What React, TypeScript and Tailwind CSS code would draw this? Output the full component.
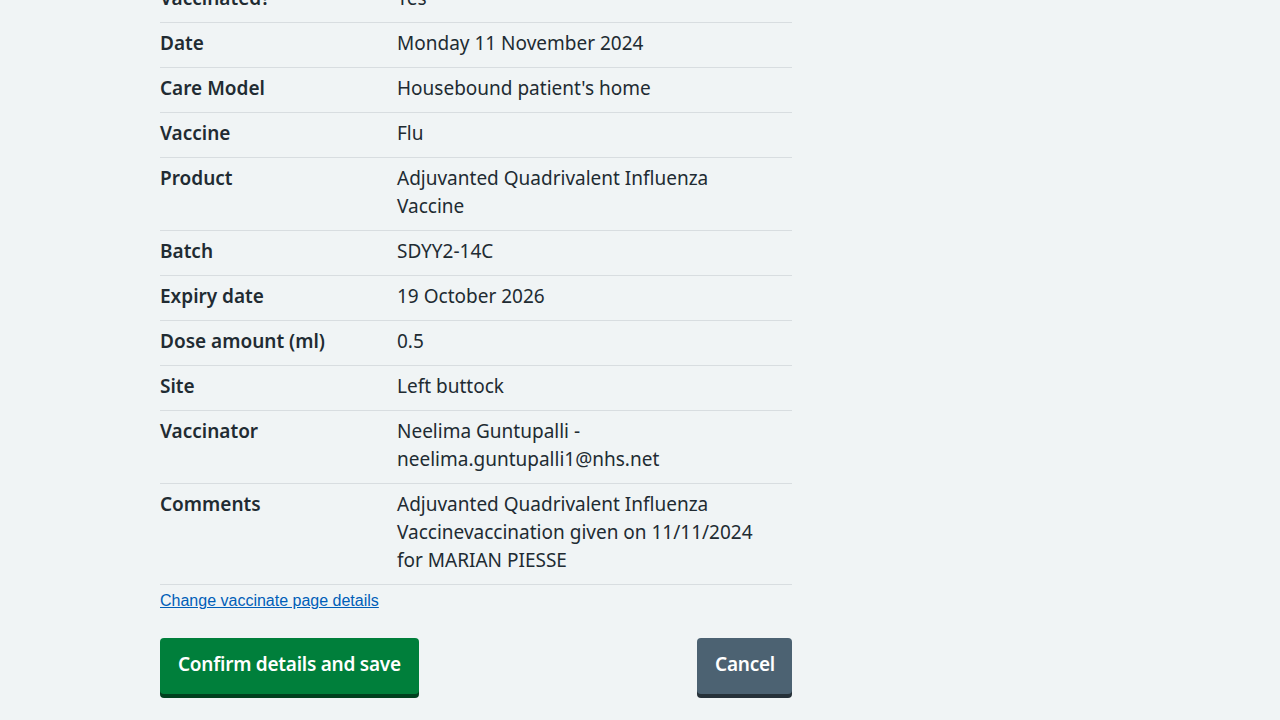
import React from "react";

type Row = { label: string; value: React.ReactNode };

const rows: Row[] = [
  { label: "Vaccinated?", value: "Yes" },
  { label: "Date", value: "Monday 11 November 2024" },
  { label: "Care Model", value: "Housebound patient's home" },
  { label: "Vaccine", value: "Flu" },
  { label: "Product", value: "Adjuvanted Quadrivalent Influenza Vaccine" },
  { label: "Batch", value: "SDYY2-14C" },
  { label: "Expiry date", value: "19 October 2026" },
  { label: "Dose amount (ml)", value: "0.5" },
  { label: "Site", value: "Left buttock" },
  {
    label: "Vaccinator",
    value: "Neelima Guntupalli - neelima.guntupalli1@nhs.net",
  },
  {
    label: "Comments",
    value:
      "Adjuvanted Quadrivalent Influenza Vaccinevaccination given on 11/11/2024 for MARIAN PIESSE",
  },
];

const App: React.FC = () => {
  return (
    <div className="min-h-[720px] bg-[#f0f4f5] font-['Noto_Sans',sans-serif] text-[#212b32] overflow-hidden">
      <div className="ml-[160px] w-[632px]">
        <dl className="-mt-[22px]">
          {rows.map((row) => (
            <div
              key={row.label}
              className="grid grid-cols-[237px_1fr] border-b border-[#d8dde0] pt-[6px] pb-[10px] text-[19px] leading-[28px]"
            >
              <dt className="font-semibold pr-4">{row.label}</dt>
              <dd className="pr-[30px] break-words">{row.value}</dd>
            </div>
          ))}
        </dl>

        <p className="pt-[3px] leading-[24px]">
          <a
            href="#"
            className="font-['Liberation_Sans',Arial,sans-serif] text-[16px] text-[#005eb8] underline"
          >
            Change vaccinate page details
          </a>
        </p>

        <div className="mt-[25px] flex items-start justify-between">
          <button className="h-[56px] rounded-[4px] bg-[#007f3b] px-[18px] pb-[4px] text-[19px] font-semibold leading-[28px] tracking-[-0.25px] text-white shadow-[0_4px_0_#00401e]">
            Confirm details and save
          </button>
          <button className="h-[56px] rounded-[4px] bg-[#4c6272] pl-[18px] pr-[17px] pb-[4px] text-[19px] font-semibold leading-[28px] tracking-[-0.25px] text-white shadow-[0_4px_0_#263139]">
            Cancel
          </button>
        </div>
      </div>
    </div>
  );
};

export default App;
